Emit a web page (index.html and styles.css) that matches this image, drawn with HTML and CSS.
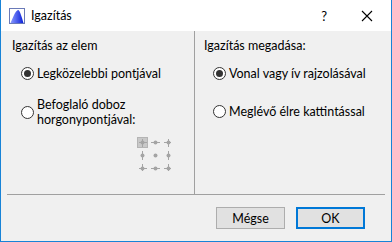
FILE: index.html
```html
<!DOCTYPE html>
<html>
<head>
<meta charset="utf-8">
<link rel="stylesheet" href="styles.css">
</head>
<body>
<div class="window">
  <div class="titlebar">
    <svg class="appicon" width="16" height="16" viewBox="0 0 16 16">
      <defs>
        <linearGradient id="g" x1="0" y1="0" x2="1" y2="0">
          <stop offset="0" stop-color="#8a9aff"/>
          <stop offset="1" stop-color="#0a1fd8"/>
        </linearGradient>
      </defs>
      <rect x="0.5" y="0.5" width="15" height="15" fill="#fff" stroke="#6a7ab8"/>
      <path d="M1.5 15 C4 10 6 3 9 2 C11 2 13 10 14.5 15 Z" fill="url(#g)"/>
    </svg>
    <span class="title">Igazítás</span>
    <span class="help">?</span>
    <svg class="close" width="12" height="12" viewBox="0 0 12 12"><path d="M1 1 L11 11 M11 1 L1 11" stroke="#000" stroke-width="1.1"/></svg>
  </div>
  <div class="body">
    <div class="panes">
      <div class="pane left">
        <div class="heading">Igazítás az elem</div>
        <div class="radio checked"><span class="dot"></span><span>Legközelebbi pontjával</span></div>
        <div class="radio two"><span class="dot"></span><span class="label2">Befoglaló doboz<br>horgonypontjával:</span></div>
        <div class="anchors">
          <svg width="36" height="36" viewBox="0 0 36 36">
            <rect x="0.5" y="0.5" width="10" height="10" fill="#c8c8c8" stroke="#b4b4b4"/>
            <g stroke="#a4a4a4" stroke-width="1">
              <path d="M2 5.5 H10 M5.5 2 V10"/>
              <path d="M14 5.5 H23"/>
              <path d="M27 5.5 H34 M31.5 2 V10"/>
              <path d="M5.5 14 V23"/>
              <path d="M31.5 14 V23"/>
              <path d="M2 31.5 H10 M5.5 27 V34"/>
              <path d="M14 31.5 H23"/>
              <path d="M27 31.5 H34 M31.5 27 V34"/>
            </g>
            <g fill="#a4a4a4">
              <circle cx="5.5" cy="5.5" r="2"/>
              <circle cx="18.5" cy="5.5" r="2"/>
              <circle cx="31.5" cy="5.5" r="2"/>
              <circle cx="5.5" cy="18.5" r="2"/>
              <circle cx="18.5" cy="18.5" r="2"/>
              <circle cx="31.5" cy="18.5" r="2"/>
              <circle cx="5.5" cy="31.5" r="2"/>
              <circle cx="18.5" cy="31.5" r="2"/>
              <circle cx="31.5" cy="31.5" r="2"/>
            </g>
          </svg>
        </div>
      </div>
      <div class="pane right">
        <div class="heading">Igazítás megadása:</div>
        <div class="radio checked"><span class="dot"></span><span>Vonal vagy ív rajzolásával</span></div>
        <div class="radio"><span class="dot"></span><span>Meglévő élre kattintással</span></div>
      </div>
    </div>
    <div class="footer">
      <button class="btn">Mégse</button>
      <button class="btn default">OK</button>
    </div>
  </div>
</div>
</body>
</html>
```
FILE: styles.css
```css
* { box-sizing: border-box; }
html, body { margin: 0; padding: 0; }
body {
  width: 392px;
  height: 242px;
  font-family: Lato, "Noto Sans", sans-serif;
  font-size: 12.5px;
  color: #000;
  background: #fff;
}
.window {
  width: 392px;
  height: 242px;
  border: 1px solid #1883d7;
  border-top: none;
  display: flex;
  flex-direction: column;
}
.titlebar {
  height: 31px;
  background: #fff;
  display: flex;
  align-items: center;
  padding-left: 8px;
}
.appicon { margin-top: 1px; }
.title {
  margin-left: 6px;
}
.help {
  margin-left: auto;
  font-size: 13px;
  margin-right: 34px;
}
.close { margin-right: 18px; }
.body {
  flex: 1;
  background: #f0f0f0;
  display: flex;
  flex-direction: column;
}
.panes {
  display: flex;
  height: 163px;
}
.pane {
  flex: none;
  padding-top: 6px;
}
.left {
  width: 194px;
  padding-left: 11px;
  border-right: 1px solid #a0a0a0;
}
.right {
  padding-left: 9px;
}
.heading {
  height: 18px;
  line-height: 18px;
}
.radio {
  display: flex;
  align-items: center;
  margin-left: 9px;
  margin-top: 11px;
  line-height: 15px;
}
.radio + .radio { margin-top: 23px; }
.left .radio + .radio { margin-top: 16px; }
.label2 { line-height: 15px; }
.dot {
  width: 13px;
  height: 13px;
  border: 1px solid #333;
  border-radius: 50%;
  background: #fff;
  margin-right: 3px;
  flex: none;
  display: flex;
  align-items: center;
  justify-content: center;
}
.checked .dot::after {
  content: "";
  width: 7px;
  height: 7px;
  border-radius: 50%;
  background: #333;
}
.anchors {
  margin-top: 10px;
  padding-left: 125px;
}
.anchors svg { display: block; }
.footer {
  margin: 0 6px;
  border-top: 1px solid #a0a0a0;
  flex: 1;
  display: flex;
  justify-content: flex-end;
  align-items: flex-start;
  padding-top: 12px;
  padding-right: 20px;
  gap: 11px;
}
.btn {
  width: 69px;
  height: 22px;
  font-family: inherit;
  font-size: 12.5px;
  background: #e1e1e1;
  border: 1px solid #adadad;
  padding: 0;
  color: #000;
}
.btn.default {
  border: 2px solid #0078d7;
}
```
